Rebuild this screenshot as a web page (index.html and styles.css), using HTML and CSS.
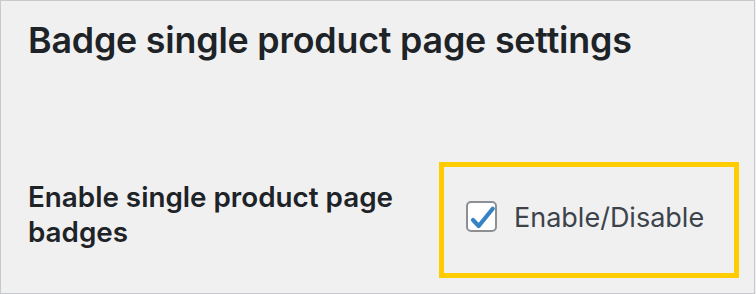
FILE: index.html
```html
<!DOCTYPE html>
<html lang="en">
<head>
<meta charset="utf-8">
<title>Badge settings</title>
<link rel="stylesheet" href="styles.css">
</head>
<body>
<div class="panel">
  <h2 class="title">Badge single product page settings</h2>
  <div class="row">
    <div class="label">Enable single product page badges</div>
    <div class="field">
      <label class="check">
        <span class="box">
          <svg width="31" height="31" viewBox="0 0 31 31"><path d="M7 19 L12.7 25 L26.7 7.7" fill="none" stroke="#3582c4" stroke-width="4.2" stroke-linecap="round" stroke-linejoin="round"/></svg>
        </span>
        <span class="text">Enable/Disable</span>
      </label>
    </div>
  </div>
</div>
</body>
</html>
```

FILE: styles.css
```css
html, body {
  margin: 0;
  padding: 0;
  background: #f0f0f1;
}
.panel {
  box-sizing: border-box;
  width: 755px;
  height: 294px;
  border: 1px solid #c8c9cc;
  background: #f0f0f1;
  padding: 0 0 0 27px;
  font-family: Inter, "Noto Sans", sans-serif;
  color: #1d2327;
}
.title {
  margin: 0;
  padding-top: 16px;
  font-size: 35.8px;
  line-height: 46px;
  font-weight: 600;
  letter-spacing: -0.2px;
}
.row {
  display: flex;
  margin-top: 99px;
}
.label {
  width: 400px;
  margin-right: 11px;
  padding-top: 18px;
  font-size: 27.8px;
  line-height: 35px;
  font-weight: 600;
}
.field {
  box-sizing: border-box;
  width: 300px;
  height: 116px;
  border: 5px solid #ffcc00;
  display: flex;
  align-items: center;
  padding-left: 22px;
}
.check {
  display: flex;
  align-items: center;
  gap: 17px;
  margin-top: -4px;
}
.box {
  box-sizing: border-box;
  width: 31px;
  height: 31px;
  margin-top: -3px;
  border: 2px solid #8c8f94;
  border-radius: 5px;
  background: #ffffff;
  position: relative;
}
.box svg {
  position: absolute;
  left: -2px;
  top: -2px;
}
.text {
  font-size: 27px;
  line-height: 32px;
  color: #3c434a;
  font-weight: 400;
}
```
